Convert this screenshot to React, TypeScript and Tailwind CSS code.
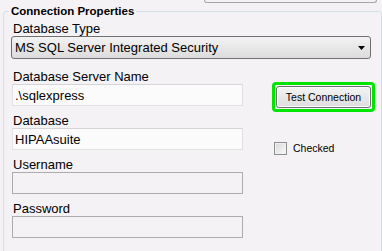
export default function App() {
  return (
    <div className="w-[382px] h-[251px] overflow-hidden bg-[#f5f2f5] font-['Liberation_Sans',Arial,sans-serif] text-black">
      {/* bottom edge of the panel above */}
      <div className="h-[3px] flex">
        <div className="ml-[204px] w-[173px] h-[3px] border border-t-0 border-[#a6a6a6] rounded-b-[3px]" />
      </div>

      <fieldset className="ml-[3px] w-[374px] h-[260px] border border-[#d5dfe5] rounded-[3px] pl-[7px] pr-[6px]">
        <legend className="-ml-[2px] px-[2px] text-[11.5px] leading-[16px] font-bold">
          Connection Properties
        </legend>

        <div className="mt-[2px] pl-[2px] text-[13px] leading-[15px]">Database Type</div>
        <div className="w-[360px] h-[23px] flex items-center justify-between border border-[#707070] rounded-[3px] bg-gradient-to-b from-[#f3f3f3] to-[#dcdcdc] pl-[3px] pr-[5px] text-[13px] leading-[15px]">
          <span>MS SQL Server Integrated Security</span>
          <svg width="7" height="4" viewBox="0 0 7 4">
            <path d="M0 0H7L3.5 4Z" fill="#000" />
          </svg>
        </div>

        <div className="flex">
          <div className="w-[232px] flex flex-col">
            <Field label="Database Server Name" value=".\sqlexpress" first />
            <Field label="Database" value="HIPAAsuite" />
            <Field label="Username" value="" disabled />
            <Field label="Password" value="" disabled />
          </div>

          <div className="ml-[29px] flex flex-col">
            <div className="mt-[23px] w-[103px] h-[30px] border-[3px] border-[#00e400] rounded-[4px] p-[1px]">
              <button className="w-full h-full flex items-center justify-center border border-[#707070] rounded-[3px] bg-gradient-to-b from-[#f4f4f4] to-[#dddddd] text-[10.5px] leading-[12px] shadow-[inset_0_0_0_1px_#fbfbfb]">
                Test Connection
              </button>
            </div>
            <label className="mt-[30px] ml-[2px] flex items-center gap-[6px] text-[10.5px] leading-[13px]">
              <span className="w-[13px] h-[13px] border border-[#8e8f8f] bg-gradient-to-br from-[#d8d8d8] to-[#fbfbfb] shadow-[inset_0_0_0_1px_#f0f0f0]" />
              Checked
            </label>
          </div>
        </div>
      </fieldset>
    </div>
  )
}

function Field({
  label,
  value,
  disabled,
  first,
}: {
  label: string
  value: string
  disabled?: boolean
  first?: boolean
}) {
  return (
    <>
      <div className={(first ? "mt-[10px]" : "mt-[7px]") + " pl-[2px] text-[13px] leading-[15px]"}>
        {label}
      </div>
      <input
        readOnly
        value={value}
        className={
          "ml-[1px] w-[231px] h-[22px] px-[2px] text-[13px] leading-[15px] outline-none border " +
          (disabled
            ? "border-[#acacac] bg-[#f5f2f5]"
            : "border-[#e2e0e2] border-t-[#d6d4d6] bg-[#fcfbfc]")
        }
      />
    </>
  )
}
